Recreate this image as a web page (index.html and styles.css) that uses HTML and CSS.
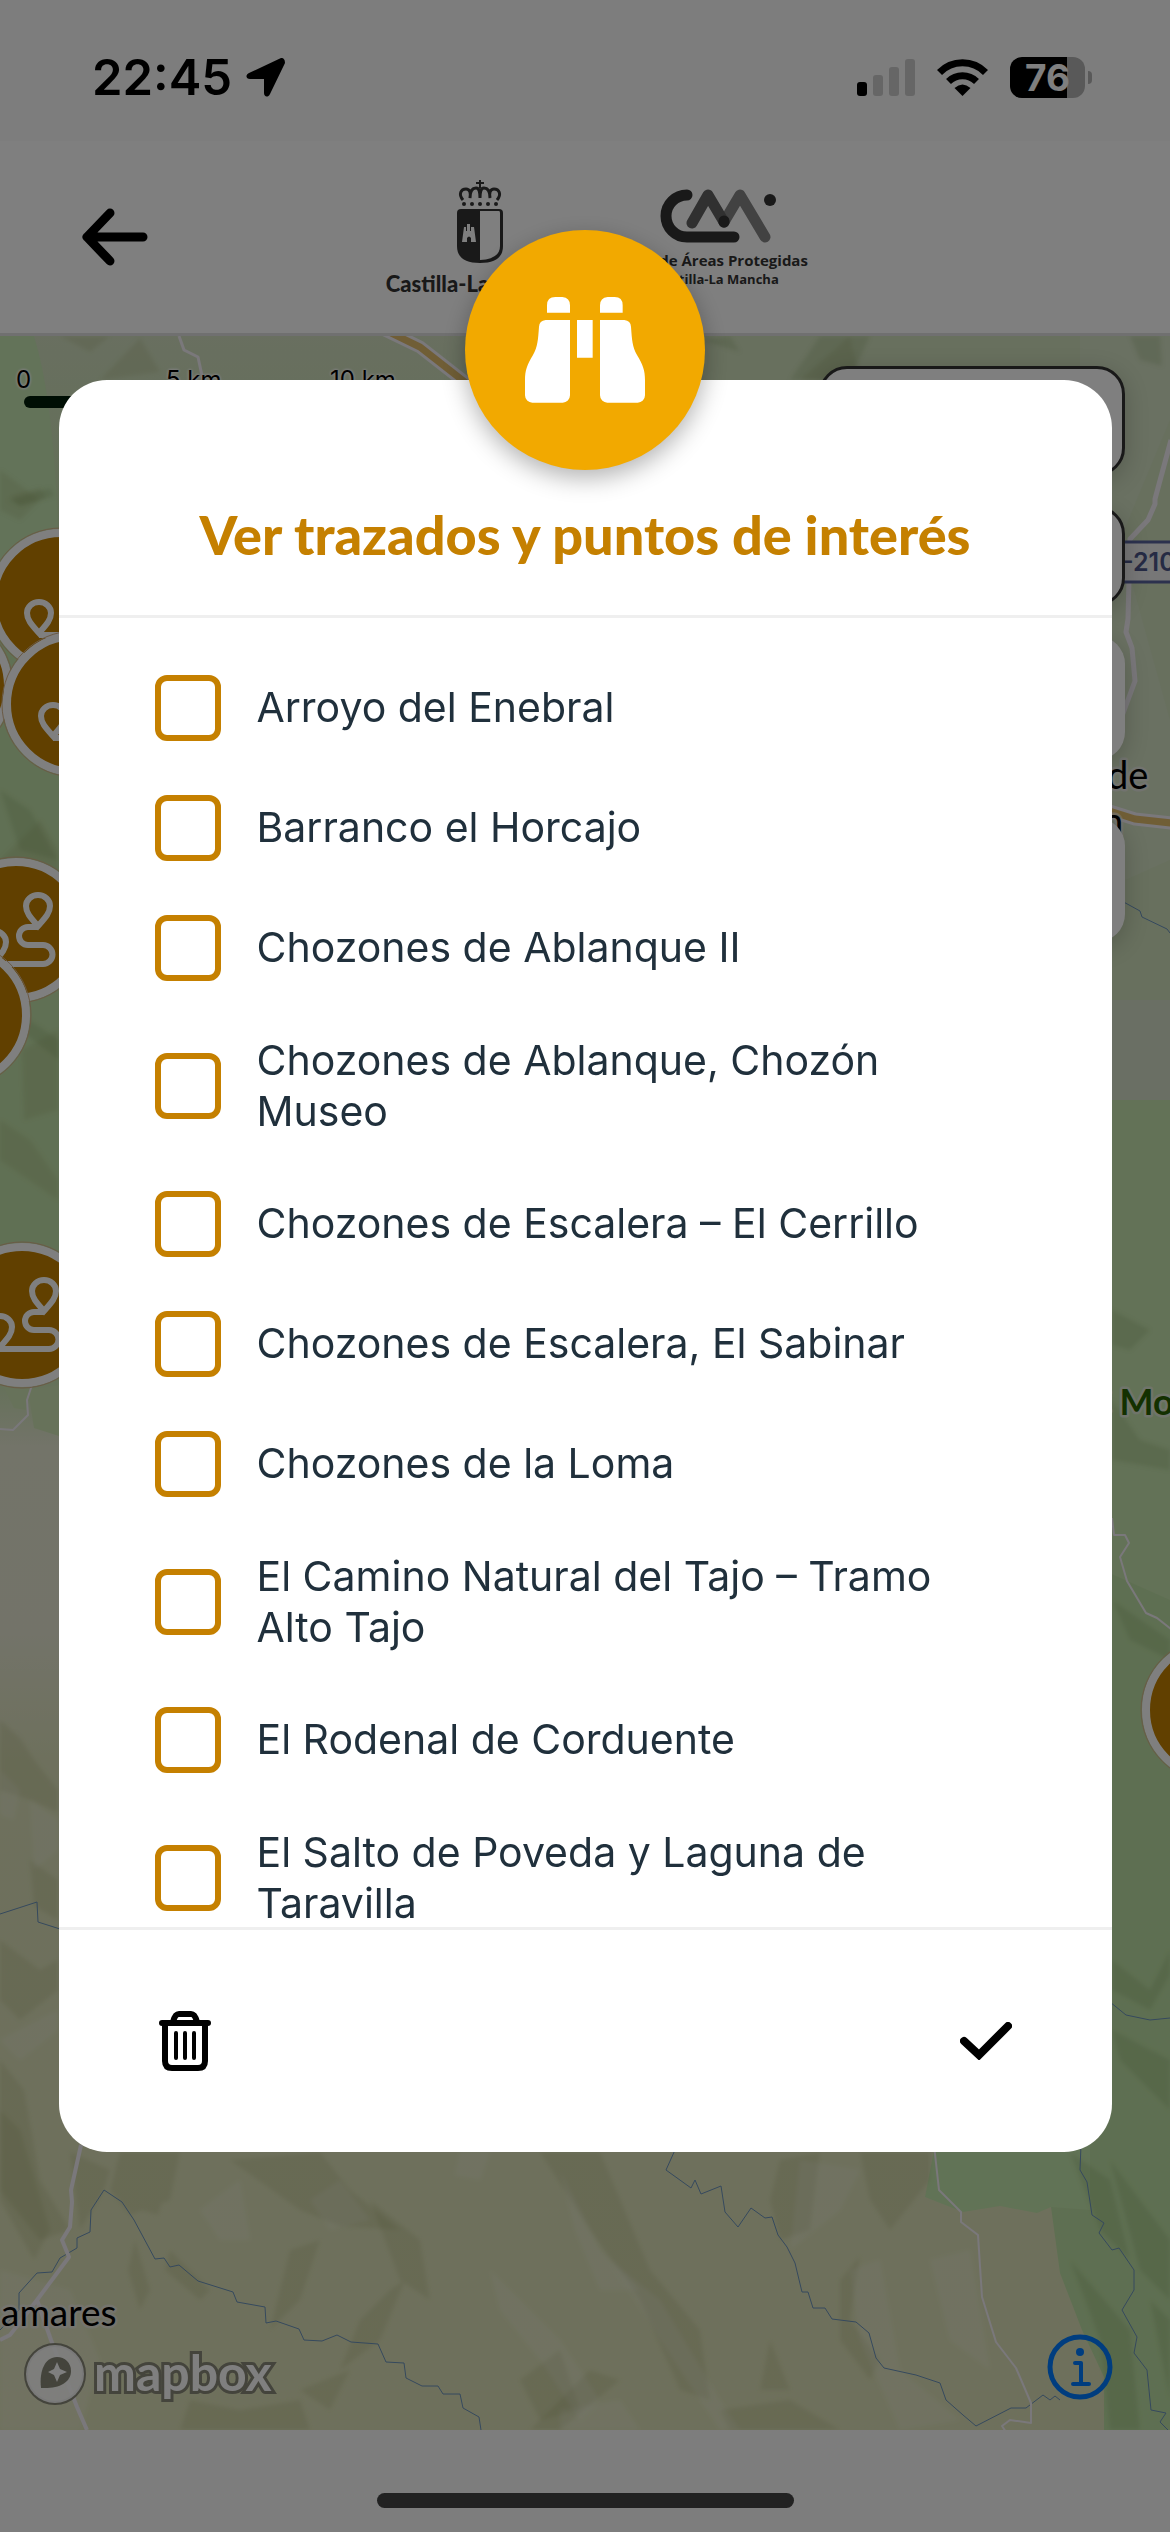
FILE: index.html
```
<!DOCTYPE html>
<html lang="es">

<head>
    <meta charset="UTF-8">
    <meta name="viewport" content="width=device-width, initial-scale=1.0">
    <title>Ver trazados y puntos de interés</title>
    <link rel="stylesheet" href="styles.css">
</head>

<body>
    <div class="status-bar">
        <span class="status-time">22:45</span>
        <svg class="status-location" viewBox="0 0 39 39"><path d="M35 0 C38 0 39 2 39 5 L24 36 C22 40 18 39 18 35 V21 H4 C0 21 -1 17 3 15 Z"/></svg>
        <div class="status-icons">
            <svg width="58" height="37" viewBox="0 0 58 37">
                <rect y="23" width="10" height="14" rx="3"/>
                <g fill="#ccc">
                    <rect x="16" y="16" width="10" height="21" rx="3"/>
                    <rect x="32" y="8" width="10" height="29" rx="3"/>
                    <rect x="48" width="10" height="37" rx="3"/>
                </g>
            </svg>
            <svg width="51" height="37" viewBox="0 0 51 37">
                <g fill="none" stroke="#000" stroke-width="7">
                    <path d="M2.500 13.500 A32 32 0 0 1 48.500 13.500"/>
                    <path d="M11.500 22.500 A20 20 0 0 1 39.500 22.500"/>
                </g>
                <path d="M17.500 29 Q25.500 22 33.500 29 L25.500 37 Z"/>
            </svg>
            <div class="battery">
                <span class="battery-level">76</span>
            </div>
        </div>
    </div>

    <header class="top-bar">
        <button class="icon-btn back-btn" aria-label="Volver">
            <svg width="66" height="58" viewBox="0 0 66 58"><path d="M28 5 L5 29 L28 53 M5 29 H61" fill="none" stroke="#000" stroke-width="9" stroke-linecap="round" stroke-linejoin="round"/></svg>
        </button>
        <div class="logos">
            <div class="logo logo-jccm">
                <svg width="46" height="84" viewBox="0 0 46 84">
                    <path d="M23 0 V8 M19 3 H27" stroke="#333" stroke-width="2"/>
                    <path d="M6 20 C1 14 4 9 9 9 C13 9 14 13 13 18 C13 12 15 8 19 8 C23 8 23 13 23 18 C23 13 23 8 27 8 C31 8 33 12 33 18 C32 13 33 9 37 9 C42 9 45 14 40 20" fill="none" stroke="#333" stroke-width="3"/>
                    <g fill="#333">
                        <circle cx="7" cy="24" r="2"/><circle cx="15" cy="24" r="2"/><circle cx="23" cy="24" r="2"/><circle cx="31" cy="24" r="2"/><circle cx="39" cy="24" r="2"/>
                        <path d="M4 29 H42 Q46 29 46 33 V66 Q46 83 23 83 Q0 83 0 66 V33 Q0 29 4 29 Z"/>
                    </g>
                    <path d="M23 31 H42 Q43 31 43 33 V66 Q43 79 23 80 Z M5 62 L7 47 H9 V51 H10 V44 H13 V51 H14 V47 H17 L19 62 H14 V58 Q12 55 10 58 V62 Z" fill="#fff"/>
                </svg>
                <span class="logo-name">Castilla-La Mancha</span>
            </div>
            <div class="logo logo-areas">
                <svg width="116" height="54" viewBox="0 0 116 54">
                    <g fill="none" stroke-width="11" stroke-linecap="round" stroke-linejoin="round">
                        <path d="M64 33 L80 6 L105 48" stroke="#858585"/>
                        <path d="M32 34 L48 6 L64 33" stroke="#606060"/>
                        <path d="M64 32 L64 33" stroke="#333"/>
                        <path d="M27 6 A21 21 0 0 0 27 48 H74" stroke="#333"/>
                    </g>
                    <circle cx="110" cy="11" r="6" fill="#333"/>
                </svg>
                <span class="logo-line">Red de Áreas Protegidas</span>
                <span class="logo-line small">Castilla-La Mancha</span>
            </div>
        </div>
    </header>

    <main class="map">
        <svg class="map-canvas" viewBox="0 336 1170 2094" preserveAspectRatio="xMidYMid slice">
            <defs>
                <linearGradient id="land" x1="0" y1="336" x2="0" y2="2430" gradientUnits="userSpaceOnUse">
                    <stop offset="0" stop-color="#d2dfc0"/>
                    <stop offset=".12" stop-color="#c1e0a8"/>
                    <stop offset=".49" stop-color="#c1e0a8"/>
                    <stop offset=".53" stop-color="#e6e8d2"/>
                    <stop offset=".62" stop-color="#e6e7d2"/>
                    <stop offset=".68" stop-color="#dce1ba"/>
                    <stop offset="1" stop-color="#dde1b8"/>
                </linearGradient>
                <filter id="soft"><feGaussianBlur stdDeviation="2"/></filter>
                <g id="pin">
                    <path d="M0 16 C-7 8 -12 3 -12 -4 A12 11 0 0 1 12 -4 C12 3 7 8 0 16 Z"/>
                </g>
                <g id="marker">
                    <circle r="68" fill="#c28000" stroke="#fff" stroke-width="8"/>
                    <circle r="73" fill="none" stroke="#d6b48a" stroke-width="1"/>
                    <g fill="none" stroke="#fff" stroke-width="6">
                        <use href="#pin" x="22" y="-20"/>
                        <use href="#pin" x="-22" y="16"/>
                        <path d="M22 -3 H12 A9 9 0 0 0 12 15 H27 A9 9 0 0 1 27 34 H-22"/>
                    </g>
                </g>
            </defs>

            <rect y="336" width="1170" height="2094" fill="url(#land)"/>

            <!-- forest and grass areas -->
            <path d="M0 336 H34 Q60 420 59 620 H0 Z" fill="#c6e6b2"/>
            <path d="M560 336 H1170 V1060 H1080 Z" fill="#d0e0bc"/>
            <path d="M1080 336 H1170 V420 L1120 540 L1170 720 V860 L1080 900 Z" fill="#d4e2c4"/>
            <path d="M1080 1000 H1170 V1100 H1080 Z" fill="#d5dec8"/>
            <path d="M1080 1100 H1170 V2152 H1080 Z" fill="#c6e4ae"/>
            <path d="M1080 1560 L1170 1600 V2430 H1104 V2377 L1082 2330 L1060 2273 L1051 2207 Z" fill="#bddfa4"/>
            <path d="M936 2140 L925 2197 L963 2212 L1000 2206 L1037 2213 L1051 2207 L1090 2210 V2140 Z" fill="#c3e6ac"/>
            <path d="M28 1390 L59 1385 V1436 L34 1428 Z M0 1380 H30 L26 1410 L14 1408 Z" fill="#cfe4b4"/>

            <!-- hill shading -->
            <g filter="url(#soft)" fill="#8f9455" fill-opacity=".17">
                <path d="M60 336 L110 336 L90 352 Z M100 380 L140 338 L160 372 Z M640 336 L700 380 H600 Z M850 336 L800 380 H860 Z"/>
                <path d="M10 496 L40 488 L46 498 L20 506 Z M0 860 L40 820 L58 850 V900 L30 880 Z"/>
                <path d="M22 1050 L58 1030 V1110 L24 1120 Z M0 1120 L30 1140 L58 1180 V1200 L0 1160 Z M0 470 L40 500 L20 520 L0 510 Z"/>
                <path d="M0 1720 L20 1738 L34 1760 L58 1790 V1812 L30 1800 L0 1790 Z M30 1860 L58 1880 V1920 L34 1906 Z"/>
                <path d="M0 1940 L40 1970 L58 1960 V1990 L20 2020 L0 2000 Z M0 2060 L24 2090 L40 2180 L70 2230 L40 2240 L0 2190 Z"/>
                <path d="M0 2110 L20 2130 L50 2230 L34 2260 L0 2200 Z M70 2152 L110 2170 L104 2190 L80 2230 Z"/>
                <path d="M120 2152 L180 2152 L170 2200 L130 2215 L110 2190 Z M140 2180 L165 2190 L158 2215 L134 2208 Z"/>
                <path d="M230 2160 L320 2152 L350 2190 L400 2230 L340 2226 L300 2210 Z M135 2240 L150 2290 L140 2310 L128 2270 Z"/>
                <path d="M170 2250 L210 2290 L200 2300 L165 2270 Z M290 2250 L320 2240 L300 2300 L270 2330 Z"/>
                <path d="M370 2200 L420 2240 L430 2300 L400 2280 Z M390 2290 L405 2280 L380 2340 L340 2370 L360 2320 Z"/>
                <path d="M540 2152 L600 2152 L650 2270 L700 2330 L710 2400 L680 2390 L640 2300 L590 2230 Z"/>
                <path d="M590 2370 L620 2380 L560 2430 H530 Z M190 2400 L240 2410 L300 2400 L310 2430 H180 Z"/>
                <path d="M780 2160 L820 2152 L810 2230 L780 2240 L770 2200 Z M840 2280 L860 2256 L850 2320 L880 2360 L870 2380 L840 2340 Z"/>
                <path d="M720 2410 L790 2400 L840 2430 H730 Z M770 2340 L790 2390 L760 2390 Z M300 2390 L350 2370 L330 2410 Z"/>
                <path d="M860 2152 H930 V2180 L890 2230 L870 2200 Z M520 2380 L560 2350 L580 2410 L540 2420 Z"/>
            </g>
            <g filter="url(#soft)" fill="#ffffff" fill-opacity=".15">
                <path d="M200 2210 L240 2180 L250 2240 L220 2240 Z M310 2200 L340 2180 L370 2220 L330 2230 Z M460 2152 H490 L480 2180 L455 2175 Z"/>
                <path d="M560 2170 L600 2250 L640 2290 L600 2290 L575 2230 Z M490 2270 L560 2340 L600 2400 L580 2420 L540 2360 L500 2310 Z"/>
                <path d="M610 2260 L660 2300 L720 2400 L740 2430 H720 L660 2340 Z M800 2160 L860 2170 L840 2210 L790 2250 Z"/>
                <path d="M850 2270 L880 2260 L900 2370 L960 2420 L900 2430 L860 2340 Z M930 2260 L970 2250 L990 2370 L950 2340 Z"/>
                <path d="M0 1770 L20 1790 L14 1820 L0 1815 Z M30 1800 L58 1820 V1850 L34 1870 Z M0 2040 L58 2010 V2030 L20 2060 Z"/>
                <path d="M0 2270 L70 2290 L100 2360 L80 2430 H0 Z M560 2410 L620 2400 L640 2430 H560 Z"/>
            </g>
            <g filter="url(#soft)" fill="#6f8848" fill-opacity=".18">
                <path d="M1112 1310 L1150 1330 L1130 1350 L1112 1345 Z M1112 1400 L1140 1440 L1170 1450 V1470 L1112 1460 Z"/>
                <path d="M1112 1600 L1170 1640 V1660 L1130 1640 Z M1112 1960 L1150 1990 L1170 1950 V1975 L1150 2010 L1112 1990 Z"/>
                <path d="M1112 2030 L1170 2060 V2110 L1120 2060 Z M1070 2152 L1110 2180 L1130 2260 L1100 2230 Z"/>
                <path d="M1110 2160 L1170 2240 V2300 L1140 2270 Z M1070 2260 L1130 2330 L1140 2430 H1110 L1100 2340 Z M1150 2300 L1170 2320 V2400 Z"/>
                <path d="M820 336 H870 L850 380 H790 Z M1130 336 H1160 L1162 366 L1140 360 Z M700 340 L730 336 L740 352 Z"/>
                <path d="M8 500 L50 488 L54 496 L20 506 Z M0 1000 L59 1040 V1060 L20 1030 Z M0 790 L30 810 L58 860 L20 850 Z"/>
            </g>

            <!-- rivers -->
            <g fill="none" stroke="#6a92bc" stroke-width="1">
                <path d="M0 2330 L19 2310 V2293 L37 2273 L52 2272 L60 2258 L77 2248 V2238 L90 2232 L91 2210 L104 2190 L122 2202 L134 2220 L155 2259 L164 2258 L170 2267 L179 2265 L198 2281 L233 2292 L237 2302 L265 2307 L266 2323 L276 2321 L299 2329 L304 2340 L322 2341 L337 2335 L351 2342 L378 2344 L386 2362 L404 2363 L406 2378 L422 2386 H438 L443 2394 H460 L463 2408 L479 2417 L481 2430"/>
                <path d="M675 2150 L666 2170 L691 2188 L695 2180 L701 2194 L721 2186 L725 2212 L738 2227 L751 2208 L765 2218 L772 2217 L778 2235 L787 2247 L795 2263 L802 2292 H808 L813 2308 H825 L832 2319 L856 2322 L869 2333 L876 2358 L884 2368 L916 2375 L940 2383 L946 2400 L963 2415 L976 2426 L1011 2408 H1026 L1043 2395 L1050 2400 L1055 2396 L1060 2400"/>
                <path d="M1081 2145 L1080 2170 L1087 2182 L1092 2215 L1104 2223 L1099 2233 L1112 2250 L1119 2248 L1134 2270 V2290 L1122 2310 L1137 2337 L1134 2353 L1147 2370 L1151 2410 L1166 2413 L1160 2422 L1168 2430"/>
                <path d="M1120 900 L1140 911 L1142 917 L1167 929 L1170 933 M1110 2002 L1126 2015 L1150 2020 L1170 2018 M0 1914 L37 1902 L38 1922 L60 1929"/>
            </g>

            <!-- roads -->
            <g fill="none" stroke="#f4f0f6" stroke-linejoin="round">
                <path d="M179 336 L184 350 L198 357 L204 385" stroke-width="3"/>
                <path d="M1171 440 L1155 499 V504 L1148 520 L1130 539 L1128 619 L1126 632 L1132 648 L1135 681 L1122 716" stroke-width="5"/>
                <path d="M1112 1518 L1114 1535 H1125 L1129 1543 L1120 1557 L1127 1581 L1146 1613 L1157 1618 L1171 1629" stroke-width="2"/>
                <path d="M32 1385 L27 1400 L28 1415 L13 1430 L0 1429" stroke-width="2"/>
                <path d="M81 2145 L71 2190 L72 2202 L70 2227 L62 2240 L69 2257 L37 2300 L51 2340 L77 2407 L87 2430 M37 2300 L10 2335 L0 2340" stroke-width="4"/>
                <path d="M934 2145 L939 2190 L961 2212 V2222 L978 2235 L982 2297 L996 2342 L1016 2368 L1031 2403 V2423 L1010 2420 L1002 2426 L1006 2432" stroke-width="2"/>
                <path d="M385 330 L420 347 L475 390 M1100 808 L1135 819 L1171 823" stroke-width="13"/>
            </g>
            <path d="M385 330 L420 347 L475 390 M1100 808 L1135 819 L1171 823" fill="none" stroke="#e0bc6c" stroke-width="7"/>

            <!-- place names -->
            <g class="map-label">
                <text x="1107" y="789" font-size="38">de</text>
                <text x="1102" y="835" font-size="38">n</text>
                <text x="1" y="2326" font-size="37">amares</text>
                <text class="park" x="1087" y="1415" font-size="36">C Mo</text>
            </g>
            <rect x="1080" y="542" width="110" height="40" fill="#eee" stroke="#58639c" stroke-width="3"/>
            <text class="road-number" x="1122" y="571">-210</text>

            <use href="#marker" x="-60" y="686"/>
            <use href="#marker" x="61" y="601"/>
            <use href="#marker" x="75" y="704"/>
            <use href="#marker" x="16" y="930"/>
            <use href="#marker" x="-42" y="1015"/>
            <use href="#marker" x="22" y="1315"/>
            <use href="#marker" x="1214" y="1710"/>
        </svg>

        <div class="map-scale">
            <div class="map-scale-labels"><span>0</span><span>5 km</span><span>10 km</span></div>
            <div class="map-scale-bar"></div>
        </div>

        <div class="map-tools">
            <button class="map-tool wide" aria-label="Capas"></button>
            <button class="map-tool outlined" aria-label="Filtros"></button>
            <button class="map-tool" aria-label="Centrar"></button>
            <button class="map-tool last" aria-label="Mi ubicación"></button>
        </div>

        <a class="mapbox-logo" href="#" aria-label="Mapbox">
            <svg width="62" height="62" viewBox="0 0 62 62">
                <circle cx="31" cy="31" r="29" fill="#fff" fill-opacity=".9" stroke="#888878" stroke-width="4"/>
                <path d="M17 45 C15 28 21 14 33 14 C41 14 47 20 47 28 C47 40 34 46 17 45 Z" fill="#888878"/>
                <path d="M33 19 L36 26 L43 29 L36 32 L33 39 L30 32 L24 29 L30 26 Z" fill="#fff"/>
            </svg>
            <span>mapbox</span>
        </a>

        <button class="icon-btn map-info" aria-label="Información">
            <svg width="66" height="66" viewBox="0 0 66 66">
                <circle cx="33" cy="33" r="30" fill="none" stroke="#007aff" stroke-width="5"/>
                <circle cx="33" cy="18" r="4" fill="#007aff"/>
                <path d="M28 29 H34 V50 M26 50 H42" fill="none" stroke="#007aff" stroke-width="4" stroke-linecap="round" stroke-linejoin="round"/>
            </svg>
        </button>
    </main>

    <div class="home-area"><div class="home-indicator"></div></div>

    <div class="overlay">
        <form class="modal" role="dialog" aria-labelledby="modal-title">
            <div class="modal-badge">
                <svg width="120" height="106" viewBox="0 0 360 318" fill="#fff">
                    <path d="M66 47 V25 Q66 0 91 0 H112 Q135 2 135 25 V47 Z M225 47 V25 Q225 2 248 0 H269 Q293 0 293 25 V47 Z M156 69 H203 V182 H156 Z"/>
                    <path id="barrel" d="M135 69 H62 Q43 71 42 89 C39 130 38 148 24 174 C6 204 0 220 0 250 V295 A22 22 0 0 0 22 317 H113 A22 22 0 0 0 135 295 Z"/>
                    <use href="#barrel" transform="translate(360 0) scale(-1 1)"/>
                </svg>
            </div>

            <h1 class="modal-title" id="modal-title">Ver trazados y puntos de interés</h1>

            <div class="options">
                <label class="option"><input type="checkbox"><span>Arroyo del Enebral</span></label>
                <label class="option"><input type="checkbox"><span>Barranco el Horcajo</span></label>
                <label class="option"><input type="checkbox"><span>Chozones de Ablanque II</span></label>
                <label class="option"><input type="checkbox"><span>Chozones de Ablanque, Chozón Museo</span></label>
                <label class="option"><input type="checkbox"><span>Chozones de Escalera – El Cerrillo</span></label>
                <label class="option"><input type="checkbox"><span>Chozones de Escalera, El Sabinar</span></label>
                <label class="option"><input type="checkbox"><span>Chozones de la Loma</span></label>
                <label class="option"><input type="checkbox"><span>El Camino Natural del Tajo – Tramo Alto Tajo</span></label>
                <label class="option"><input type="checkbox"><span>El Rodenal de Corduente</span></label>
                <label class="option"><input type="checkbox"><span>El Salto de Poveda y Laguna de Taravilla</span></label>
            </div>

            <div class="modal-actions">
                <button type="reset" class="icon-btn" aria-label="Borrar selección">
                    <svg width="52" height="60" viewBox="0 0 52 60" fill="none" stroke="#000" stroke-linecap="round" stroke-linejoin="round">
                        <path d="M3 12 H49 M6 12 V50 Q6 57 13 57 H39 Q46 57 46 50 V12 M14 11 Q16 3 20 3 H32 Q36 3 38 11" stroke-width="6"/>
                        <path d="M17 22 V47 M26 22 V47 M35 22 V47" stroke-width="4"/>
                    </svg>
                </button>
                <button type="submit" class="icon-btn" aria-label="Aceptar">
                    <svg width="52" height="38" viewBox="0 0 52 38"><path d="M4 19 L19 33 L48 4" fill="none" stroke="#000" stroke-width="8" stroke-linecap="round"/></svg>
                </button>
            </div>
        </form>
    </div>
</body>

</html>
```
FILE: styles.css
```
* {
    box-sizing: border-box;
}

body {
    display: flex;
    flex-direction: column;
    min-height: 100vh;
    margin: 0;
    font-family: Inter, "Liberation Sans", sans-serif;
    background-color: #fafafa;
}

svg {
    display: block;
}

.icon-btn {
    padding: 0;
    border: none;
    background: none;
    cursor: pointer;
}

/* status bar */
.status-bar {
    display: flex;
    align-items: center;
    height: 141px;
    padding: 14px 79px 0 92px;
}

.status-time {
    font-size: 49px;
    font-weight: 600;
    line-height: 60px;
}

.status-location {
    width: 39px;
    height: 39px;
    margin-left: 14px;
}

.status-icons {
    display: flex;
    align-items: center;
    gap: 22px;
    margin-left: auto;
}

.battery {
    position: relative;
    width: 75px;
    height: 41px;
    margin-right: 6px;
    border-radius: 12px;
    background: linear-gradient(to right, #000 57px, #b3b3b3 57px);
}

.battery::after {
    content: "";
    position: absolute;
    top: 14px;
    right: -7px;
    width: 4px;
    height: 13px;
    border-radius: 0 4px 4px 0;
    background-color: #b3b3b3;
}

.battery-level {
    display: block;
    font-size: 37px;
    font-weight: 700;
    line-height: 41px;
    text-align: center;
    color: #fff;
}

/* header */
.top-bar {
    display: flex;
    align-items: center;
    height: 195px;
    padding: 0 119px 0 82px;
    border-bottom: 3px solid #e0e0e0;
    background-color: #fff;
}

.logos {
    display: flex;
    gap: 56px;
    margin: 0 auto;
    padding-top: 6px;
}

.logo {
    display: flex;
    flex-direction: column;
    align-items: center;
    color: #333;
    white-space: nowrap;
}

.logo-jccm {
    width: 180px;
}

.logo-areas {
    width: 184px;
    padding-top: 9px;
}

.logo-name {
    margin-top: 4px;
    font-family: Lato, sans-serif;
    font-size: 22px;
    font-weight: 900;
    line-height: 32px;
}

.logo-line {
    margin-top: 6px;
    font-family: "Open Sans", sans-serif;
    font-size: 15px;
    font-weight: 700;
    line-height: 22px;
}

.logo-line.small {
    margin-top: 0;
    font-size: 13px;
    line-height: 16px;
}

/* map */
.map {
    position: relative;
    flex: 1;
    overflow: hidden;
}

.map-canvas {
    position: absolute;
    width: 100%;
    height: 100%;
}

.map-label {
    font-family: Lato, sans-serif;
    fill: #000;
    stroke: #f0ecf0;
    stroke-opacity: 0.6;
    stroke-width: 5px;
    stroke-linejoin: round;
    paint-order: stroke;
}

.park {
    font-weight: 700;
    fill: #266000;
}

.road-number {
    font-size: 25px;
    font-weight: 600;
    fill: #4c5689;
}

.map-scale {
    position: absolute;
    top: 28px;
    left: 16px;
}

.map-scale-labels {
    display: flex;
    font-size: 24px;
    line-height: 32px;
    text-shadow: 0 0 3px #fff, 0 0 3px #fff, 0 0 3px #fff;
}

.map-scale-labels span {
    min-width: 150px;
}

.map-scale-labels span:nth-child(2) {
    min-width: 164px;
}

.map-scale-bar {
    width: 340px;
    height: 12px;
    margin-left: 8px;
    border-radius: 6px;
    background-color: #001c08;
}

.map-tools {
    position: absolute;
    top: 30px;
    right: 45px;
    display: flex;
    flex-direction: column;
    align-items: flex-end;
    gap: 30px;
}

.map-tool {
    width: 124px;
    height: 124px;
    border: none;
    border-radius: 28px;
    background-color: #fff;
    box-shadow: 0 6px 24px rgba(0, 0, 0, 0.2);
}

.map-tool.wide {
    width: 306px;
    height: 110px;
    border: 3px solid #333;
}

.map-tool.outlined {
    height: 100px;
    border: 3px solid #333;
}

.map-tool.last {
    margin-top: 28px;
}

.mapbox-logo {
    position: absolute;
    bottom: 25px;
    left: 24px;
    display: flex;
    align-items: center;
    gap: 8px;
    font-family: Lato, sans-serif;
    font-size: 50px;
    font-weight: 700;
    line-height: 62px;
    color: #fff;
    text-decoration: none;
    -webkit-text-stroke: 6px #888878;
    paint-order: stroke;
}

.mapbox-logo span {
    margin-top: -4px;
}

.map-info {
    position: absolute;
    right: 57px;
    bottom: 30px;
}

/* home indicator */
.home-area {
    display: flex;
    justify-content: center;
    align-items: flex-end;
    height: 102px;
    padding-bottom: 24px;
}

.home-indicator {
    width: 417px;
    height: 15px;
    border-radius: 8px;
    background-color: #444;
}

/* modal */
.overlay {
    position: fixed;
    inset: 0;
    padding: 15vh 5vw;
    background-color: rgba(0, 0, 0, 0.5);
}

.modal {
    position: relative;
    display: flex;
    flex-direction: column;
    height: 70vh;
    border-radius: 48px;
    background-color: #fff;
}

.modal-badge {
    position: absolute;
    top: -150px;
    left: calc(50% - 120px);
    display: flex;
    justify-content: center;
    align-items: center;
    width: 240px;
    height: 240px;
    border-radius: 50%;
    background-color: #f2a900;
    box-shadow: 0 8px 24px rgba(0, 0, 0, 0.3);
}

.modal-title {
    margin: 0;
    padding: 120px 48px 46px;
    border-bottom: 3px solid #efefef;
    font-family: Lato, sans-serif;
    font-size: 54px;
    font-weight: 900;
    line-height: 69px;
    text-align: center;
    color: #c58000;
}

.options {
    display: flex;
    flex: 1;
    flex-direction: column;
    gap: 54px;
    min-height: 0;
    padding: 57px 140px 0 96px;
    overflow-y: auto;
    scrollbar-width: none;
}

.option {
    display: flex;
    flex-shrink: 0;
    align-items: center;
    gap: 36px;
    font-size: 41px;
    line-height: 51px;
    color: #20303c;
}

.option input {
    flex-shrink: 0;
    appearance: none;
    width: 66px;
    height: 66px;
    margin: 0;
    border: 6px solid #c58000;
    border-radius: 12px;
}

.option input:checked {
    background-color: #c58000;
}

.modal-actions {
    display: flex;
    justify-content: space-between;
    align-items: center;
    height: 225px;
    padding: 0 100px;
    border-top: 3px solid #efefef;
}
```
